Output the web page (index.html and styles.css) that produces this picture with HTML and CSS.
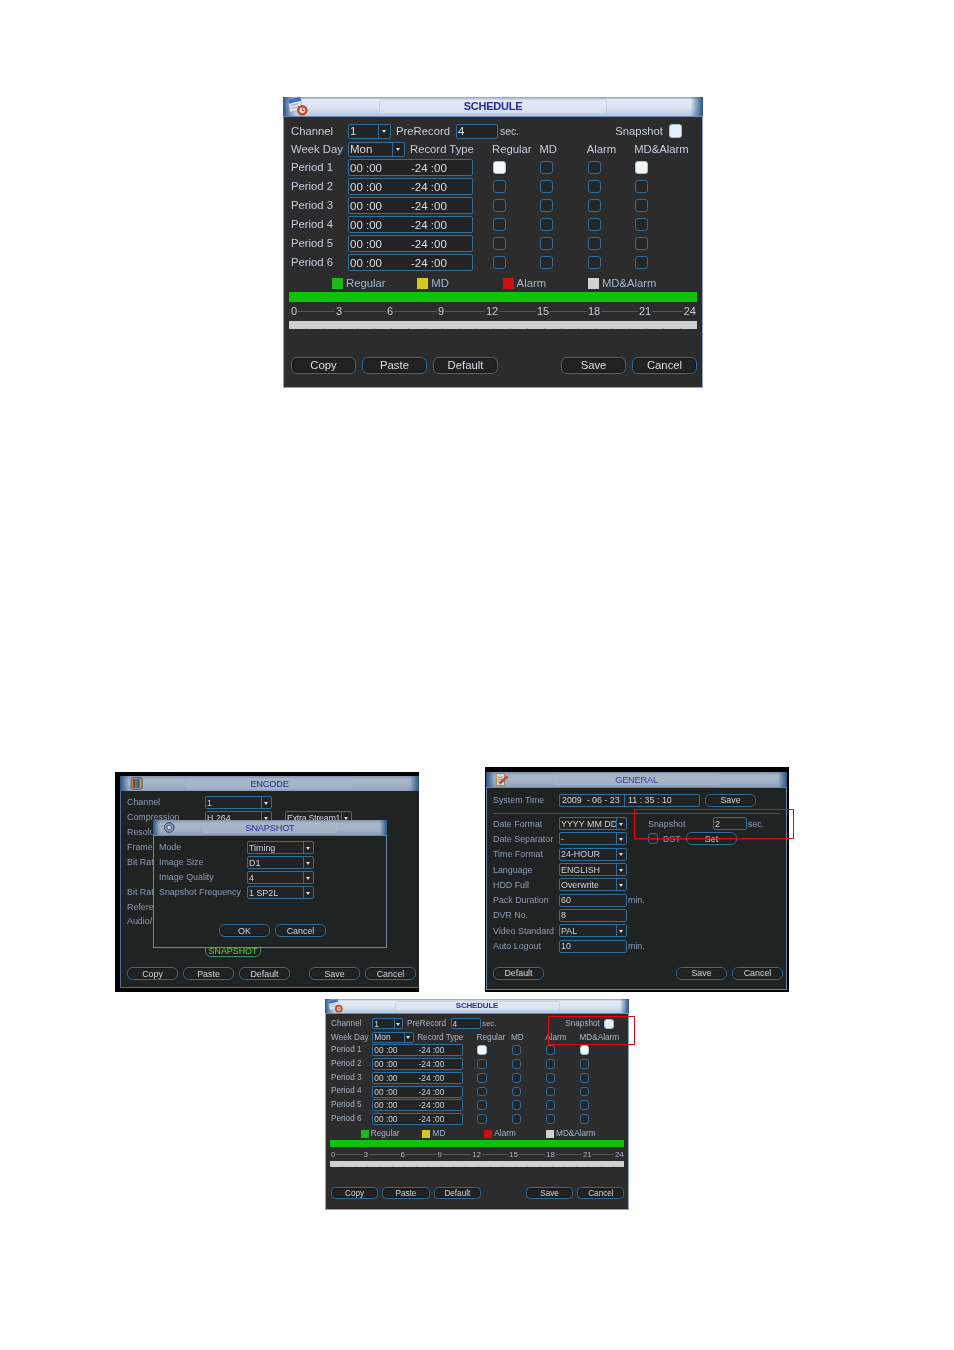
FILE: index.html
```html
<!DOCTYPE html>
<html lang="en">
<head>
<meta charset="utf-8">
<title>DVR manual page</title>
<link rel="stylesheet" href="styles.css">
</head>
<body>
<main class="page">

  <section class="win sched sched-large">
    <header class="titlebar">
      <svg class="ticon" viewBox="0 0 24 20"><path d="M1 3l13-3 2 13-13 3z" fill="#dfe7f2" stroke="#8296bb" stroke-width=".6"/><path d="M1 3l13-3 .8 4-13 3z" fill="#3f6fc0"/><path d="M4 9l8-2M4.500 12l8-2" stroke="#8aa" stroke-width="1"/><circle cx="16" cy="14" r="5.500" fill="#c9431e"/><circle cx="16" cy="14" r="3" fill="#f3e5d0"/><path d="M16 12v2h2" stroke="#622" fill="none"/></svg>
      <div class="plate">SCHEDULE</div>
    </header>
    <div class="sbody">
      <div class="srow srow-first">
        <span class="slabel">Channel</span>
        <span class="sel s-ch"><span>1</span><i></i></span>
        <span class="s-pre">PreRecord</span>
        <span class="inp s-inp">4</span>
        <span class="s-sec">sec.</span>
        <span class="s-snap">Snapshot</span>
        <span class="cb on soft"></span>
      </div>
      <div class="srow srow-second">
        <span class="slabel">Week Day</span>
        <span class="sel s-wd"><span>Mon</span><i></i></span>
        <span class="s-rt">Record Type</span>
        <span class="s-col">Regular</span>
        <span class="s-col">MD</span>
        <span class="s-col">Alarm</span>
        <span class="s-col">MD&amp;Alarm</span>
      </div>
      <div class="prow"><span class="plabel">Period 1</span><span class="inp pfield"><b>00 :00</b><b>-24 :00</b></span><span></span><span class="cb on"></span><span class="cb"></span><span class="cb"></span><span class="cb on"></span></div>
      <div class="prow"><span class="plabel">Period 2</span><span class="inp pfield"><b>00 :00</b><b>-24 :00</b></span><span></span><span class="cb"></span><span class="cb"></span><span class="cb"></span><span class="cb"></span></div>
      <div class="prow"><span class="plabel">Period 3</span><span class="inp pfield"><b>00 :00</b><b>-24 :00</b></span><span></span><span class="cb"></span><span class="cb"></span><span class="cb"></span><span class="cb"></span></div>
      <div class="prow"><span class="plabel">Period 4</span><span class="inp pfield"><b>00 :00</b><b>-24 :00</b></span><span></span><span class="cb"></span><span class="cb"></span><span class="cb"></span><span class="cb"></span></div>
      <div class="prow"><span class="plabel">Period 5</span><span class="inp pfield"><b>00 :00</b><b>-24 :00</b></span><span></span><span class="cb"></span><span class="cb"></span><span class="cb"></span><span class="cb"></span></div>
      <div class="prow"><span class="plabel">Period 6</span><span class="inp pfield"><b>00 :00</b><b>-24 :00</b></span><span></span><span class="cb"></span><span class="cb"></span><span class="cb"></span><span class="cb"></span></div>
      <div class="legend">
        <span class="leg"><i class="sw sw-green"></i>Regular</span>
        <span class="leg"><i class="sw sw-yellow"></i>MD</span>
        <span class="leg"><i class="sw sw-red"></i>Alarm</span>
        <span class="leg"><i class="sw sw-gray"></i>MD&amp;Alarm</span>
      </div>
      <div class="greenbar"></div>
      <div class="scale"><span>0</span><span>3</span><span>6</span><span>9</span><span>12</span><span>15</span><span>18</span><span>21</span><span>24</span></div>
      <div class="graybar"></div>
      <div class="sbtns">
        <span class="btn">Copy</span><span class="btn">Paste</span><span class="btn">Default</span>
        <span class="btn btn-push">Save</span><span class="btn">Cancel</span>
      </div>
    </div>
  </section>

  <div class="row">
    <section class="win encode">
      <header class="titlebar">
        <svg class="ticon" viewBox="0 0 24 20"><rect x="6" y="2" width="15" height="16" rx="3" fill="#8d8f8c" stroke="#555"/><rect x="8.500" y="4" width="3" height="12" fill="#c92a22"/><rect x="11.500" y="4" width="3" height="12" fill="#2f9a3a"/><rect x="14.500" y="4" width="3" height="12" fill="#2a4fc0"/><rect x="17.500" y="4" width="1.500" height="12" fill="#c9a52a"/></svg>
        <div class="plate">ENCODE</div>
      </header>
      <div class="ebody">
        <div class="erow"><span class="elabel">Channel</span><span class="sel e-sel"><span>1</span><i></i></span></div>
        <div class="erow"><span class="elabel">Compression</span><span class="sel e-sel"><span>H.264</span><i></i></span><span class="sel e-extra"><span>Extra Stream1</span><i></i></span></div>
        <div class="erow erow-under"><span class="elabel">Resolu</span></div>
        <div class="erow erow-under"><span class="elabel">Frame</span></div>
        <div class="erow erow-under"><span class="elabel">Bit Rate</span></div>
        <div class="erow"></div>
        <div class="erow erow-under"><span class="elabel">Bit Rate</span></div>
        <div class="erow erow-under"><span class="elabel">Refere</span></div>
        <div class="erow erow-under erow-tight"><span class="elabel">Audio/</span></div>
        <div class="e-snapbtn"><span class="btn btn-green">SNAPSHOT</span></div>
        <div class="ebtns">
          <span class="btn">Copy</span><span class="btn">Paste</span><span class="btn">Default</span>
          <span class="btn btn-push">Save</span><span class="btn">Cancel</span>
        </div>
      </div>
      <div class="dialog">
        <header class="titlebar">
          <svg class="ticon" viewBox="0 0 24 20"><circle cx="13" cy="10" r="6.500" fill="#8a9ab4" stroke="#2c3550" stroke-width="1.200"/><circle cx="13" cy="10" r="3" fill="#d6e0ee" stroke="#2c3550"/><circle cx="3" cy="8" r="1.300" fill="#4fd04a"/></svg>
          <div class="plate">SNAPSHOT</div>
        </header>
        <div class="dbody">
          <div class="drow"><span class="dlabel">Mode</span><span class="sel d-sel"><span>Timing</span><i></i></span></div>
          <div class="drow"><span class="dlabel">Image Size</span><span class="sel d-sel"><span>D1</span><i></i></span></div>
          <div class="drow"><span class="dlabel">Image Quality</span><span class="sel d-sel"><span>4</span><i></i></span></div>
          <div class="drow"><span class="dlabel">Snapshot Frequency</span><span class="sel d-sel"><span>1 SP2L</span><i></i></span></div>
          <div class="dbtns"><span class="btn">OK</span><span class="btn">Cancel</span></div>
        </div>
      </div>
    </section>

    <section class="win general">
      <header class="titlebar">
        <svg class="ticon" viewBox="0 0 24 20"><rect x="5" y="2" width="11" height="16" rx="1" fill="#d9d9cf" stroke="#b5752a" stroke-width="1.300"/><path d="M7 7h7M7 10h7M7 13h5" stroke="#4f8f5a"/><path d="M10 13l9-8 2 2-9 8-3 1z" fill="#d84a2a" stroke="#3a5fc0" stroke-width=".7"/></svg>
        <div class="plate">GENERAL</div>
      </header>
      <div class="gbody">
        <div class="gtime">
          <span class="glabel">System Time</span>
          <span class="inp g-clock"><span class="g-date">2009&nbsp; - 06 - 23</span><span class="g-hms">11 : 35 : 10</span></span>
          <span class="btn g-timesave">Save</span>
        </div>
        <div class="ghr"></div>
        <div class="gcols">
          <div class="gleft">
            <div class="grow"><span class="glabel">Date Format</span><span class="sel g-sel"><span>YYYY MM DD</span><i></i></span></div>
            <div class="grow"><span class="glabel">Date Separator</span><span class="sel g-sel"><span>-</span><i></i></span></div>
            <div class="grow"><span class="glabel">Time Format</span><span class="sel g-sel"><span>24-HOUR</span><i></i></span></div>
            <div class="grow"><span class="glabel">Language</span><span class="sel g-sel"><span>ENGLISH</span><i></i></span></div>
            <div class="grow"><span class="glabel">HDD Full</span><span class="sel g-sel"><span>Overwrite</span><i></i></span></div>
            <div class="grow"><span class="glabel">Pack Duration</span><span class="inp g-sel">60</span><span class="gunit">min.</span></div>
            <div class="grow"><span class="glabel">DVR No.</span><span class="inp g-sel">8</span></div>
            <div class="grow"><span class="glabel">Video Standard</span><span class="sel g-sel"><span>PAL</span><i></i></span></div>
            <div class="grow"><span class="glabel">Auto Logout</span><span class="inp g-sel">10</span><span class="gunit">min.</span></div>
          </div>
          <div class="gright">
            <div class="g-snap"><span class="g-snaplabel">Snapshot</span><span class="inp g-snapinp">2</span><span class="gunit">sec.</span></div>
            <div class="g-dst"><span class="cb g-cb"></span><span class="g-dstlabel">DST</span><span class="btn g-set">Set</span></div>
          </div>
        </div>
        <div class="gbtns">
          <span class="btn">Default</span>
          <span class="btn btn-push">Save</span><span class="btn">Cancel</span>
        </div>
      </div>
      <div class="redbox red-general"></div>
    </section>
  </div>

  <section class="win sched sched-small">
    <header class="titlebar">
      <svg class="ticon" viewBox="0 0 24 20"><path d="M1 3l13-3 2 13-13 3z" fill="#dfe7f2" stroke="#8296bb" stroke-width=".6"/><path d="M1 3l13-3 .8 4-13 3z" fill="#3f6fc0"/><path d="M4 9l8-2M4.500 12l8-2" stroke="#8aa" stroke-width="1"/><circle cx="16" cy="14" r="5.500" fill="#c9431e"/><circle cx="16" cy="14" r="3" fill="#f3e5d0"/><path d="M16 12v2h2" stroke="#622" fill="none"/></svg>
      <div class="plate">SCHEDULE</div>
    </header>
    <div class="sbody">
      <div class="srow srow-first">
        <span class="slabel">Channel</span>
        <span class="sel s-ch"><span>1</span><i></i></span>
        <span class="s-pre">PreRecord</span>
        <span class="inp s-inp">4</span>
        <span class="s-sec">sec.</span>
        <span class="s-snap">Snapshot</span>
        <span class="cb on soft"></span>
      </div>
      <div class="srow srow-second">
        <span class="slabel">Week Day</span>
        <span class="sel s-wd"><span>Mon</span><i></i></span>
        <span class="s-rt">Record Type</span>
        <span class="s-col">Regular</span>
        <span class="s-col">MD</span>
        <span class="s-col">Alarm</span>
        <span class="s-col">MD&amp;Alarm</span>
      </div>
      <div class="prow"><span class="plabel">Period 1</span><span class="inp pfield"><b>00 :00</b><b>-24 :00</b></span><span></span><span class="cb on"></span><span class="cb"></span><span class="cb"></span><span class="cb on"></span></div>
      <div class="prow"><span class="plabel">Period 2</span><span class="inp pfield"><b>00 :00</b><b>-24 :00</b></span><span></span><span class="cb"></span><span class="cb"></span><span class="cb"></span><span class="cb"></span></div>
      <div class="prow"><span class="plabel">Period 3</span><span class="inp pfield"><b>00 :00</b><b>-24 :00</b></span><span></span><span class="cb"></span><span class="cb"></span><span class="cb"></span><span class="cb"></span></div>
      <div class="prow"><span class="plabel">Period 4</span><span class="inp pfield"><b>00 :00</b><b>-24 :00</b></span><span></span><span class="cb"></span><span class="cb"></span><span class="cb"></span><span class="cb"></span></div>
      <div class="prow"><span class="plabel">Period 5</span><span class="inp pfield"><b>00 :00</b><b>-24 :00</b></span><span></span><span class="cb"></span><span class="cb"></span><span class="cb"></span><span class="cb"></span></div>
      <div class="prow"><span class="plabel">Period 6</span><span class="inp pfield"><b>00 :00</b><b>-24 :00</b></span><span></span><span class="cb"></span><span class="cb"></span><span class="cb"></span><span class="cb"></span></div>
      <div class="legend">
        <span class="leg"><i class="sw sw-green"></i>Regular</span>
        <span class="leg"><i class="sw sw-yellow"></i>MD</span>
        <span class="leg"><i class="sw sw-red"></i>Alarm</span>
        <span class="leg"><i class="sw sw-gray"></i>MD&amp;Alarm</span>
      </div>
      <div class="greenbar"></div>
      <div class="scale"><span>0</span><span>3</span><span>6</span><span>9</span><span>12</span><span>15</span><span>18</span><span>21</span><span>24</span></div>
      <div class="graybar"></div>
      <div class="sbtns">
        <span class="btn">Copy</span><span class="btn">Paste</span><span class="btn">Default</span>
        <span class="btn btn-push">Save</span><span class="btn">Cancel</span>
      </div>
    </div>
    <div class="redbox red-schedule"></div>
  </section>

</main>
</body>
</html>
```

FILE: styles.css
```css
* { box-sizing: border-box; }
html, body { margin: 0; padding: 0; background: #fff; }
.page {
  width: 954px; height: 1350px; overflow: hidden;
  padding-top: 97px;
  font-family: "Liberation Sans", Arial, sans-serif;
}
.win {
  --u: 1px; --ink: #c3cddb; --val: #d9dfe8; position: relative;
  --tb: linear-gradient(180deg, #7d98c4 0, #e6edf6 14%, #dbe4f1 55%, #b5c8e2 100%);
  --plate: rgba(224, 232, 243, .55);
}
.win > .titlebar, .win > div:not(.redbox), .dialog { filter: blur(.35px); }

/* title bars */
.titlebar {
  position: relative; display: flex; justify-content: center; align-items: center;
  background:
    linear-gradient(90deg, #2a5488 0, rgba(42,84,136,0) 3%, rgba(42,84,136,0) 97%, #2a5488 100%),
    var(--tb);
  color: #2b2a9c;
}
.ticon { position: absolute; left: calc(var(--u) * 3); top: 0; width: calc(var(--u) * 25); height: 100%; }
.plate {
  height: 76%; display: flex; align-items: center; justify-content: center;
  border: 1px solid rgba(170, 186, 210, .45); border-radius: 2px;
  background: var(--plate);
  letter-spacing: -.02em;
}

/* controls */
.sel, .inp {
  display: inline-flex; align-items: center; flex: none;
  border: 1.5px solid #2f6f9e; border-radius: 2px; background: #232323;
  color: var(--val); overflow: hidden; white-space: nowrap;
}
.sel > span { flex: 1; padding-left: 1px; overflow: hidden; }
.inp { padding-left: 1px; }
.sel > i {
  position: relative; flex: none; align-self: stretch; width: 10px;
  border-left: 1px solid #2f6f9e;
}
.sel > i::after {
  content: ""; position: absolute; left: 50%; top: 50%; margin: -1px 0 0 -2.5px;
  border: 2.5px solid transparent; border-top: 3px solid #d8dde4; border-bottom: 0;
}
.cb {
  display: block; flex: none; width: calc(var(--u) * 13); height: calc(var(--u) * 13.5);
  border: 1.5px solid #2f6f9e; border-radius: 3px; background: #262626;
}
.cb.on { background: #f4f7fb; border-color: #9cc2de; }
.cb.soft { background: #e4eff8; }
.btn {
  display: flex; align-items: center; justify-content: center; flex: none;
  border: 1.5px solid #2f6f9e; border-radius: calc(var(--u) * 6);
  color: var(--val); background: #222;
  box-shadow: inset 0 0 2px #000;
}
.btn-push { margin-left: auto; }

/* schedule window */
.sched { width: calc(var(--u) * 420); height: calc(var(--u) * 291); font-size: calc(var(--u) * 11.3); color: var(--ink); }
.sched-large { margin-left: 283px; }
.sched-small { --u: .724px; --ink: #a9b4c6; --val: #ccd3dd; margin: 7px 0 0 325px; }
.sched > .titlebar { height: calc(var(--u) * 19); }
.sched .plate { width: calc(var(--u) * 228); font-size: calc(var(--u) * 11); font-weight: 700; padding-bottom: 1px; }
.sbody {
  height: calc(var(--u) * 272);
  padding: calc(var(--u) * 4.5) calc(var(--u) * 5) 0 calc(var(--u) * 7);
  background: #2c2c2c;
  border: 1px solid #8fa3c6; border-top: 1px solid #6f8ab4;
}
.srow { display: flex; align-items: center; white-space: nowrap; }
.srow-first { height: calc(var(--u) * 19); }
.srow-second { height: calc(var(--u) * 17.5); }
.slabel { width: calc(var(--u) * 57); flex: none; }
.sched .sel, .sched .inp { font-size: calc(var(--u) * 11.5); height: calc(var(--u) * 15); }
.sched .sel > i { width: calc(var(--u) * 12); }
.s-ch { width: calc(var(--u) * 43); }
.s-pre { width: calc(var(--u) * 65); padding-left: calc(var(--u) * 5); flex: none; }
.s-inp { width: calc(var(--u) * 42); }
.s-sec { margin-left: calc(var(--u) * 2); font-size: calc(var(--u) * 10.5); }
.s-snap { margin-left: auto; margin-right: calc(var(--u) * 6); }
.srow-first .cb { margin-right: calc(var(--u) * 15); }
.s-wd { width: calc(var(--u) * 57); }
.s-rt { width: calc(var(--u) * 87); padding-left: calc(var(--u) * 5); flex: none; }
.s-col { width: calc(var(--u) * 47.4); flex: none; }
.prow {
  display: grid; align-items: center; height: calc(var(--u) * 19);
  grid-template-columns: calc(var(--u) * 57) calc(var(--u) * 125) calc(var(--u) * 20) repeat(4, calc(var(--u) * 47.3));
}
.plabel { margin-top: calc(var(--u) * -2); }
.sched .pfield { height: calc(var(--u) * 16.5); }
.pfield b { font-weight: 400; }
.pfield b:first-child { width: calc(var(--u) * 61); }
.legend { display: flex; height: calc(var(--u) * 15); margin-top: calc(var(--u) * 3.5); padding-left: calc(var(--u) * 41); }
.leg { display: flex; align-items: center; width: calc(var(--u) * 85.3); flex: none; white-space: nowrap; color: #9fb6d2; }
.sw { width: calc(var(--u) * 11); height: calc(var(--u) * 11); margin-right: calc(var(--u) * 3); flex: none; }
.sw-green { background: #1db81a; } .sw-yellow { background: #d4c820; } .sw-red { background: #cc1010; } .sw-gray { background: #d2d2d2; }
.greenbar { height: calc(var(--u) * 10); margin: calc(var(--u) * 1) 0 0 calc(var(--u) * -2); background: #0fc10a; }
.scale {
  display: grid; align-items: center;
  grid-template-columns: calc(var(--u) * 22.5) repeat(7, calc(var(--u) * 51)) 1fr;
  justify-items: center;
  height: calc(var(--u) * 19); font-size: calc(var(--u) * 11);
  background: linear-gradient(#565656, #565656) center / 100% 1px no-repeat;
}
.scale span { background: #2c2c2c; padding: 0 calc(var(--u) * 1); }
.scale span:first-child { justify-self: start; padding-left: 0; }
.scale span:last-child { justify-self: end; }
.graybar {
  height: calc(var(--u) * 8); margin-left: calc(var(--u) * -2);
  background:
    repeating-linear-gradient(90deg, #a8a8a8 0 1px, transparent 1px calc(var(--u) * 17)) 0 100% / 100% 1px no-repeat,
    #cfcfcf;
}
.sbtns { display: flex; gap: calc(var(--u) * 6); margin-top: calc(var(--u) * 28); }
.sbtns .btn { width: calc(var(--u) * 65); height: calc(var(--u) * 17); }

/* red call-outs */
.redbox { position: absolute; border: 1.5px solid #e30613; }
.red-general { left: 149px; top: 42px; width: 160px; height: 30px; }
.red-schedule { left: calc(var(--u) * 308); top: calc(var(--u) * 23); width: calc(var(--u) * 120); height: calc(var(--u) * 40); }

/* lower row */
.row { display: flex; align-items: flex-end; gap: 66px; margin: 379px 0 0 115px; }
.encode, .general {
  font-size: 8.9px; color: #8e9cb8; --val: #ccd3dd;
  --tb: linear-gradient(180deg, #8494ae 0, #aab6c8 25%, #a3b0c4 65%, #8d9fba 100%);
  --plate: rgba(170, 182, 200, .5);
}
.encode .plate, .general .plate, .dialog .plate { font-size: 9.2px; font-weight: 400; }
.encode .sel, .general .sel, .encode .inp, .general .inp { height: 13px; font-size: 8.9px; }

/* encode window */
.encode { width: 304px; height: 220px; background: #000; padding: 4px 0 0 5px; }
.encode > .titlebar { height: 15px; }
.encode > .titlebar .plate { width: 165px; }
.ebody { height: 197px; background: #1f2322; border-left: 1px solid #4d6f9e; border-bottom: 1px solid #4d6f9e; padding: 4px 0 0 6px; }
.erow { display: flex; align-items: center; height: 15px; white-space: nowrap; }
.erow-tight { margin-top: -1px; }
.elabel { width: 78px; flex: none; margin-top: -2px; }
.erow-under .elabel { width: 26px; overflow: hidden; }
.e-sel { width: 67px; }
.e-extra { width: 67px; margin-left: 13px; letter-spacing: -.03em; }
.e-snapbtn { margin: 14px 0 0 78px; }
.btn-green { width: 56px; height: 14px; color: #5fd02a; border-color: #3f8f7a; font-size: 8.9px; padding-top: 2px; }
.ebtns { display: flex; gap: 5px; margin-top: 10px; padding-right: 3px; }
.ebtns .btn { width: 51px; height: 13px; }

/* snapshot dialog */
.dialog { position: absolute; left: 38px; top: 48px; width: 234px; height: 128px; background: #1f2322; }
.dialog > .titlebar { height: 15px; }
.dialog .plate { width: 134px; }
.dbody { height: 113px; border: 1px solid #6f86a8; padding: 4px 0 0 5px; }
.drow { display: flex; align-items: center; height: 15px; white-space: nowrap; }
.dlabel { width: 88px; flex: none; margin-top: -2px; }
.d-sel { width: 67px; }
.dbtns { display: flex; gap: 5px; margin-top: 24px; padding-left: 60px; }
.dbtns .btn { width: 51px; height: 13px; }

/* general window */
.general { width: 304px; height: 225px; background: #000; padding: 5px 2px 2px 1px; }
.general > .titlebar { height: 15px; }
.general > .titlebar .plate { width: 166px; color: #3a3aa0; }
.gbody { height: 203px; background: #1f2322; border: 1px solid #6f86a8; padding: 5px 3px 0 6px; }
.glabel { width: 66px; flex: none; white-space: nowrap; }
.gtime { display: flex; align-items: center; height: 14px; }
.g-clock { width: 141px; padding: 0; }
.g-date { width: 65px; padding-left: 2px; border-right: 1px solid #2f6f9e; white-space: nowrap; line-height: 13px; }
.g-hms { padding-left: 3px; white-space: nowrap; }
.g-timesave { width: 51px; height: 13px; margin-left: 5px; }
.ghr { height: 1px; margin-top: 6px; width: 287px; background: #2f5a7e; }
.gcols { display: flex; margin-top: 2px; }
.gleft { width: 155px; flex: none; }
.grow { display: flex; align-items: center; height: 15.3px; white-space: nowrap; }
.g-sel { width: 68px; }
.gunit { margin-left: 1px; }
.gright { padding-top: 0; }
.g-snap, .g-dst { display: flex; align-items: center; height: 15px; white-space: nowrap; }
.g-snaplabel { width: 65px; flex: none; }
.g-snapinp { width: 34px; }
.cb.g-cb { width: 10px; height: 11px; }
.g-dstlabel { margin-left: 5px; width: 23px; }
.g-set { width: 51px; height: 13px; }
.gbtns { display: flex; gap: 5px; margin-top: 13px; }
.gbtns .btn { width: 51px; height: 13px; }
```
